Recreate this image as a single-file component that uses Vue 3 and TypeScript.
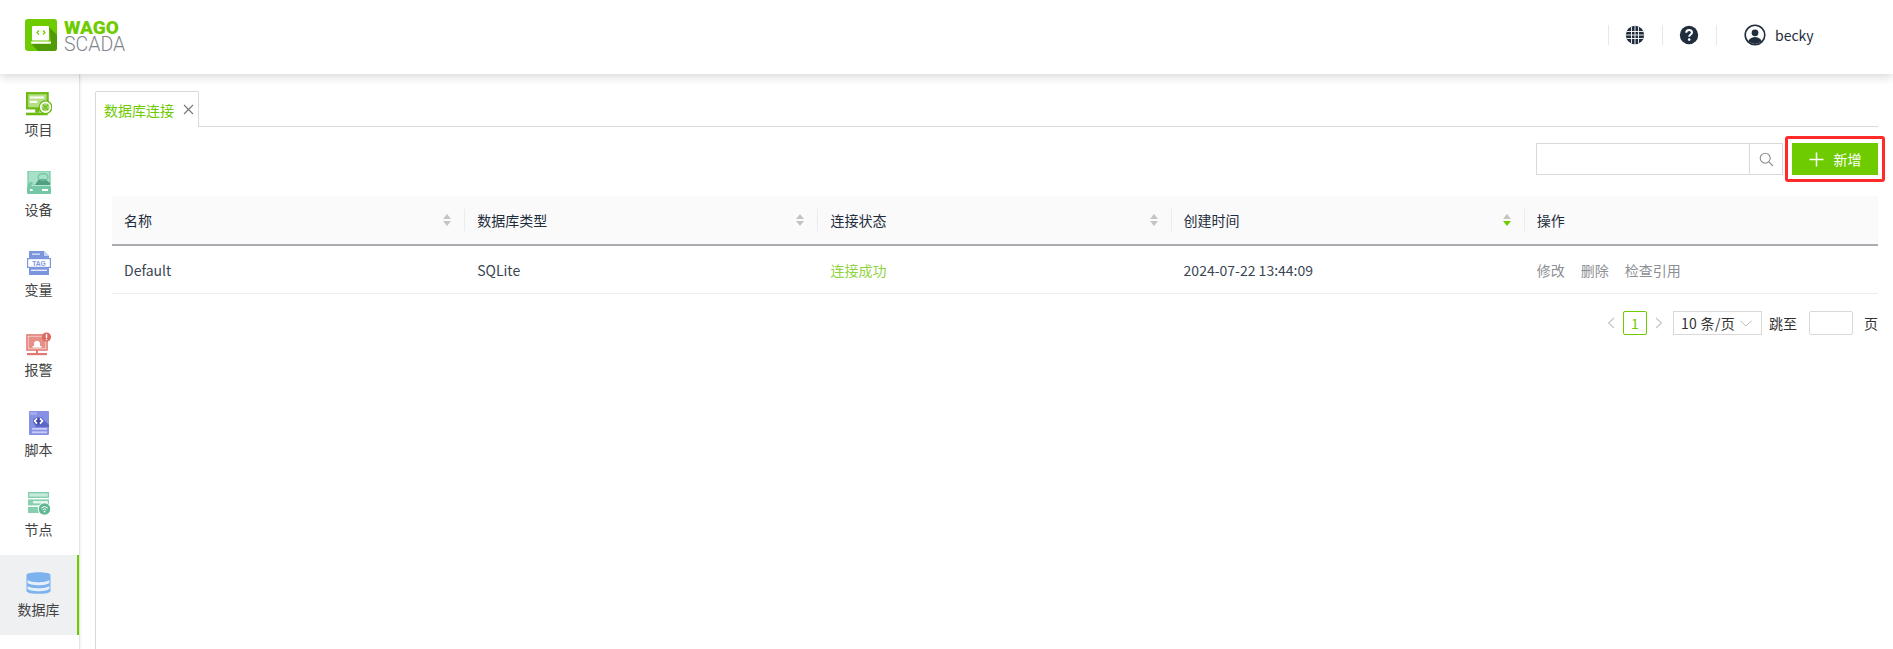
<script setup lang="ts">
interface Column { title: string; sort: 'none' | 'desc' }
const columns: Column[] = [
  { title: '名称', sort: 'none' },
  { title: '数据库类型', sort: 'none' },
  { title: '连接状态', sort: 'none' },
  { title: '创建时间', sort: 'desc' },
]
const navItems = [
  { key: 'project', label: '项目' },
  { key: 'device', label: '设备' },
  { key: 'tag', label: '变量' },
  { key: 'alarm', label: '报警' },
  { key: 'script', label: '脚本' },
  { key: 'node', label: '节点' },
  { key: 'db', label: '数据库' },
]
</script>

<template>
  <div class="app">
    <header class="header">
      <div class="logo">
        <svg class="logo-mark" width="32" height="32" viewBox="0 0 32 32">
          <rect width="32" height="32" rx="3" fill="#6ecb00" />
          <path d="M6 24.5 H26 L24 8 L32 16 V29 Q32 32 29 32 H13 Z" fill="#4f9a06" />
          <rect x="7" y="7" width="17" height="14.5" rx="1" fill="#fff" />
          <rect x="6" y="22.5" width="20" height="2.2" rx="1" fill="#fff" />
          <path d="M14 11.5 L12 13.5 L14 15.5 M18 11.5 L20 13.5 L18 15.5" fill="none" stroke="#6ecb00" stroke-width="1.2" />
        </svg>
        <div class="logo-text">
          <span class="logo-wago">WAGO</span>
          <span class="logo-scada">SCADA</span>
        </div>
      </div>
      <div class="header-right">
        <span class="sep"></span>
        <svg class="hicon" width="20" height="20" viewBox="0 0 20 20">
          <circle cx="10" cy="10" r="9.2" fill="#1f2d3d" />
          <path d="M6.5 1.5 V18.5 M10 .8 V19.2 M13.5 1.5 V18.5 M1.5 6.5 H18.5 M.8 10 H19.2 M1.5 13.5 H18.5" stroke="#fff" stroke-width=".9" fill="none" />
        </svg>
        <span class="sep"></span>
        <svg class="hicon" width="20" height="20" viewBox="0 0 20 20">
          <circle cx="10" cy="10" r="9.2" fill="#1f2d3d" />
          <path d="M7.2 7.8 C7.2 6 8.5 5 10.1 5 C11.8 5 13 6 13 7.5 C13 9.5 10.2 9.6 10.2 11.8" fill="none" stroke="#fff" stroke-width="2" />
          <circle cx="10.2" cy="14.6" r="1.3" fill="#fff" />
        </svg>
        <span class="sep"></span>
        <svg class="user-icon" width="22" height="22" viewBox="0 0 22 22">
          <defs><clipPath id="uc"><circle cx="11" cy="11" r="9" /></clipPath></defs>
          <circle cx="11" cy="11" r="9.8" fill="none" stroke="#1f2d3d" stroke-width="1.6" />
          <circle cx="11" cy="8.8" r="3.4" fill="#1f2d3d" />
          <ellipse cx="11" cy="18.5" rx="7" ry="5.4" fill="#1f2d3d" clip-path="url(#uc)" />
        </svg>
        <span class="user-name">becky</span>
      </div>
    </header>

    <div class="body">
      <nav class="sidebar">
        <a v-for="item in navItems" :key="item.key" class="nav-item" :class="{ active: item.key === 'db' }">
          <svg v-if="item.key === 'project'" width="26" height="24" viewBox="0 0 24 22">
            <rect x="1" y="1" width="19" height="14" fill="#b5de85" stroke="#6cba12" stroke-width="2" />
            <rect x="3.5" y="4" width="13" height="2" fill="#fff" opacity=".9" />
            <rect x="3.5" y="8" width="7" height="2" fill="#fff" opacity=".9" />
            <rect x="8.5" y="15" width="4" height="4" fill="#6cba12" />
            <rect y="19" width="20" height="2.4" fill="#6cba12" />
            <circle cx="18" cy="14" r="5.8" fill="#fff" stroke="#6cba12" stroke-width="1.2" />
            <circle cx="18" cy="14" r="3.6" fill="#a5d66e" />
            <path d="M15.6 11.6 L20.4 16.4 M20.4 11.6 L15.6 16.4" stroke="#6cba12" stroke-width="1" />
          </svg>
          <svg v-else-if="item.key === 'device'" class="up1" width="24" height="24" viewBox="0 0 24 24">
            <path d="M1 0 H23 V14 H1 Z" fill="#a9e0c8" stroke="#74c8a5" stroke-width="1.2" />
            <path d="M8 14 L12 8 H18 L23 12 V14 Z" fill="#4f9f80" />
            <ellipse cx="16" cy="6" rx="5" ry="3.4" fill="none" stroke="#6cc3a0" stroke-width="1.2" />
            <path d="M0 15 L3 11 H6 L4 15 Z" fill="#74c8a5" />
            <rect y="15" width="24" height="8" rx="1" fill="#74c8a5" />
            <rect x="3" y="18" width="2.6" height="2" fill="#fff" />
            <rect x="15" y="18" width="6" height="2" fill="#fff" />
          </svg>
          <svg v-else-if="item.key === 'tag'" class="up1" width="24" height="24" viewBox="0 0 24 24">
            <path d="M2 0 H17 L22 5 V24 H2 Z" fill="#7b96dc" />
            <path d="M17 0 L22 5 H17 Z" fill="#c4d1f2" />
            <rect x="5" y="2.5" width="8" height="1.4" fill="#fff" opacity=".7" />
            <rect x="0.6" y="7.6" width="22.8" height="8.8" fill="#fff" stroke="#7b96dc" stroke-width="1.2" />
            <text x="12" y="14.8" text-anchor="middle" class="tag-text">TAG</text>
            <rect x="4" y="18.6" width="16" height="1.4" fill="#fff" opacity=".8" />
          </svg>
          <svg v-else-if="item.key === 'alarm'" width="26" height="24" viewBox="0 0 26 24">
            <rect x="1" y="3" width="20" height="15" fill="none" stroke="#e07a72" stroke-width="1.6" />
            <rect x="2.4" y="4.4" width="17.2" height="12.2" fill="#e88f88" />
            <path d="M8 14 V10.5 Q11 7 14 10.5 V14 Z" fill="#fff" />
            <rect x="6.5" y="14" width="9" height="1.6" fill="#fff" />
            <rect x="10" y="18" width="2" height="3" fill="#e07a72" />
            <rect x="1" y="21" width="20" height="2.2" fill="#e07a72" />
            <circle cx="20.5" cy="5" r="4.6" fill="#dc6a62" />
            <rect x="19.8" y="2" width="1.4" height="4" fill="#fff" />
            <rect x="19.8" y="6.8" width="1.4" height="1.3" fill="#fff" />
          </svg>
          <svg v-else-if="item.key === 'script'" class="up1" width="22" height="24" viewBox="0 0 22 24">
            <rect x="1" width="20" height="24" rx="1" fill="#8690e4" />
            <rect x="2" y="1" width="7" height="3" fill="#a3abee" />
            <path d="M6 13 L13 6 L21 14 V16 H8 Z" fill="#5c66c8" />
            <ellipse cx="10" cy="10" rx="5" ry="3.6" fill="#3e47a8" />
            <path d="M9 7.4 L6.6 10 L9 12.6 M12 7.4 L14.4 10 L12 12.6" fill="none" stroke="#fff" stroke-width="1.8" />
            <rect x="4" y="17" width="15" height="1.8" fill="#c9cdf5" />
            <rect x="4" y="20.4" width="15" height="1.8" fill="#c9cdf5" />
          </svg>
          <svg v-else-if="item.key === 'node'" width="24" height="24" viewBox="0 0 24 24">
            <rect x="1" y="0" width="21" height="6" fill="#85cfae" />
            <rect x="2.2" y="1.4" width="18.6" height="3.2" fill="#c8ead9" />
            <rect x="1" y="7.4" width="21" height="6" fill="#85cfae" />
            <rect x="6" y="9" width="14.8" height="2.4" fill="#e4f5ec" />
            <rect x="1" y="15" width="21" height="6" fill="#85cfae" />
            <circle cx="17.5" cy="17" r="6.2" fill="#5fb891" stroke="#fff" stroke-width="1" />
            <path d="M14.2 16 Q17.5 13 20.8 16 M15.6 17.8 Q17.5 16 19.4 17.8" fill="none" stroke="#fff" stroke-width="1" />
            <circle cx="17.5" cy="19.6" r=".9" fill="#fff" />
          </svg>
          <svg v-else class="db-icon" width="25" height="24" viewBox="0 0 25 24">
            <path d="M.5 4 C.5 .4 24.5 .4 24.5 4 V20 C24.5 23.8 .5 23.8 .5 20 Z" fill="#7cb2ee" />
            <path d="M1.6 9 C5 12 20 12 23.4 9 V12 C20 15 5 15 1.6 12 Z" fill="#e6f0fb" />
            <path d="M1.6 15 C5 18 20 18 23.4 15 V18 C20 21 5 21 1.6 18 Z" fill="#e6f0fb" />
          </svg>
          <span class="nav-label">{{ item.label }}</span>
        </a>
      </nav>

      <main class="main">
        <div class="tabs">
          <div class="tab">
            <span class="tab-title">数据库连接</span>
            <svg width="11" height="11" viewBox="0 0 11 11"><path d="M1 1 L10 10 M10 1 L1 10" stroke="#777" stroke-width="1.1" /></svg>
          </div>
          <div class="tab-rest"></div>
        </div>

        <section class="content">
          <div class="toolbar">
            <div class="search">
              <div class="search-input"></div>
              <div class="search-btn">
                <svg width="15" height="15" viewBox="0 0 15 15"><circle cx="6.2" cy="6.2" r="5" fill="none" stroke="#8c8c8c" stroke-width="1.1" /><path d="M9.8 9.8 L14 14" stroke="#8c8c8c" stroke-width="1.1" /></svg>
              </div>
            </div>
            <button class="add-btn" type="button">
              <svg width="15" height="15" viewBox="0 0 15 15"><path d="M7.5 .5 V14.5 M.5 7.5 H14.5" stroke="#fff" stroke-width="1.5" /></svg>
              <span>新增</span>
            </button>
          </div>

          <div class="table">
            <div class="row head">
              <div v-for="col in columns" :key="col.title" class="cell">
                <span>{{ col.title }}</span>
                <span class="sorter">
                  <i class="up"></i>
                  <i class="down" :class="{ on: col.sort === 'desc' }"></i>
                </span>
                <span class="divider"></span>
              </div>
              <div class="cell">操作</div>
            </div>
            <div class="row data">
              <div class="cell">Default</div>
              <div class="cell">SQLite</div>
              <div class="cell ok">连接成功</div>
              <div class="cell">2024-07-22 13:44:09</div>
              <div class="cell ops"><span>修改</span><span>删除</span><span>检查引用</span></div>
            </div>
          </div>

          <div class="pager">
            <svg width="8" height="12" viewBox="0 0 8 12"><path d="M7 1 L1.5 6 L7 11" fill="none" stroke="#c4c4c4" stroke-width="1.1" /></svg>
            <span class="page-num">1</span>
            <svg width="8" height="12" viewBox="0 0 8 12"><path d="M1 1 L6.5 6 L1 11" fill="none" stroke="#c4c4c4" stroke-width="1.1" /></svg>
            <div class="size">
              <span class="size-text">10 条/页</span>
              <svg width="12" height="7" viewBox="0 0 12 7"><path d="M.5 .8 L6 6 L11.5 .8" fill="none" stroke="#bfbfbf" stroke-width="1" /></svg>
            </div>
            <span class="jump">跳至</span>
            <div class="jump-input"></div>
            <span class="jump-end">页</span>
          </div>
        </section>
      </main>
    </div>
  </div>
</template>

<style>
html, body { margin: 0; background: #fff; }
</style>

<style scoped>
.app {
  height: 100vh;
  display: flex;
  flex-direction: column;
  overflow: hidden;
  font-family: "Noto Sans CJK SC", "Noto Sans", sans-serif;
  font-size: 14px;
  color: #333;
  background: #fff;
}
.header {
  height: 74px;
  flex: none;
  display: flex;
  align-items: center;
  justify-content: space-between;
  padding: 0 0 4px 25px;
  box-sizing: border-box;
  background: #fff;
  box-shadow: 0 2px 10px rgba(0, 0, 0, 0.18);
  position: relative;
  z-index: 2;
}
.logo { display: flex; align-items: center; gap: 7px; }
.logo-text { display: flex; flex-direction: column; padding-top: 1px; font-family: Roboto, "Liberation Sans", sans-serif; line-height: 17px; }
.logo-wago { font-size: 19px; font-weight: 900; color: #6ecb00; }
.logo-scada { font-size: 19.5px; font-weight: 300; color: #7f858c; }
.header-right { display: flex; align-items: center; width: 285px; }
.sep { width: 1px; height: 20px; background: #e8e8e8; }
.hicon { margin: 0 17px 0 16px; flex: none; }
.user-icon { margin-left: 27px; flex: none; }
.user-name { margin-left: 9px; color: #1f2d3d; font-size: 14px; }

.body { flex: 1; display: flex; min-height: 0; }
.sidebar {
  width: 80px;
  flex: none;
  box-sizing: border-box;
  padding-top: 1px;
  border-right: 1px solid #e3e3e3;
  box-shadow: 1px 0 3px rgba(0, 0, 0, 0.06);
  display: flex;
  flex-direction: column;
}
.nav-item {
  height: 80px;
  flex: none;
  box-sizing: border-box;
  border-right: 2px solid transparent;
  padding-top: 17px;
  display: flex;
  flex-direction: column;
  align-items: center;
  gap: 3px;
}
.nav-item svg { display: block; }
.nav-item .up1 { margin-top: -1px; margin-bottom: 1px; }
.nav-item .db-icon { margin-top: -1px; margin-bottom: 1px; }
.nav-item.active { background: #eef0f2; border-right: 2px solid #6ecb00; }
.nav-label { font-size: 14px; line-height: 20px; color: #444; }
.tag-text { font: 700 6.6px "Liberation Sans", sans-serif; fill: #7b96dc; }

.main {
  flex: 1;
  min-width: 0;
  padding: 17px 15px 0;
  display: flex;
  flex-direction: column;
}
.tabs { display: flex; height: 36px; flex: none; box-sizing: border-box; }
.tab {
  width: 104px;
  box-sizing: border-box;
  border: 1px solid #d9d9d9;
  border-bottom: 0;
  border-radius: 2px 2px 0 0;
  display: flex;
  align-items: center;
  gap: 9px;
  padding-left: 8px;
}
.tab-title { color: #6ecb00; font-size: 14px; }
.tab-rest { flex: 1; border-bottom: 1px solid #d9d9d9; }
.content {
  flex: 1;
  border-left: 1px solid #d9d9d9;
  padding: 16px 0 0 16px;
}
.toolbar { display: flex; justify-content: flex-end; gap: 9px; height: 32px; }
.search { display: flex; width: 247px; }
.search-input { flex: 1; border: 1px solid #d9d9d9; }
.search-btn {
  width: 33px;
  box-sizing: border-box;
  border: 1px solid #d9d9d9;
  border-left: 0;
  display: flex;
  align-items: center;
  justify-content: center;
}
.add-btn {
  width: 86px;
  height: 32px;
  border: 0;
  padding: 0;
  background: #6ecb00;
  color: #fff;
  font-family: inherit;
  font-size: 14px;
  display: flex;
  align-items: center;
  justify-content: center;
  gap: 10px;
  position: relative;
}
.add-btn::after {
  content: "";
  position: absolute;
  inset: -7px;
  border: 3px solid #ff2a2a;
  border-radius: 3px;
}
.table { margin-top: 21px; }
.row { display: grid; grid-template-columns: repeat(5, 1fr); }
.head {
  height: 50px;
  box-sizing: border-box;
  background: #fafafa;
  border-bottom: 2px solid #a9adb2;
  color: #1f2d3d;
}
.data { height: 48px; box-sizing: border-box; border-bottom: 1px solid #eee; color: #3a4654; }
.cell {
  display: flex;
  align-items: center;
  padding: 0 12px;
  position: relative;
  min-width: 0;
}
.sorter {
  position: absolute;
  right: 14px;
  top: 50%;
  transform: translateY(-50%);
  display: flex;
  flex-direction: column;
  gap: 2px;
}
.sorter i { display: block; width: 0; height: 0; border-left: 4.5px solid transparent; border-right: 4.5px solid transparent; }
.sorter .up { border-bottom: 5px solid #c4c4c4; }
.sorter .down { border-top: 5px solid #c4c4c4; }
.sorter .down.on { border-top-color: #6ecb00; }
.divider {
  position: absolute;
  right: 0;
  top: 13px;
  height: 22px;
  width: 1px;
  background: #ececec;
}
.ok { color: #8fd43f; }
.ops { gap: 16px; color: #8c8f94; }
.pager {
  display: flex;
  align-items: center;
  justify-content: flex-end;
  margin-top: 17px;
  height: 24px;
  color: #333;
  font-size: 14px;
}
.page-num {
  width: 24px;
  height: 24px;
  box-sizing: border-box;
  border: 1px solid #6ecb00;
  border-radius: 2px;
  color: #6ecb00;
  display: flex;
  align-items: center;
  justify-content: center;
  margin: 0 8px;
}
.size {
  margin-left: 10px;
  width: 89px;
  height: 24px;
  box-sizing: border-box;
  border: 1px solid #d9d9d9;
  display: flex;
  align-items: center;
  gap: 5px;
  padding-left: 7px;
}
.size-text { letter-spacing: 0.3px; }
.jump { margin-left: 7px; }
.jump-input {
  margin-left: 12px;
  width: 44px;
  height: 24px;
  box-sizing: border-box;
  border: 1px solid #d9d9d9;
  border-radius: 2px;
}
.jump-end { margin-left: 11px; }
</style>
